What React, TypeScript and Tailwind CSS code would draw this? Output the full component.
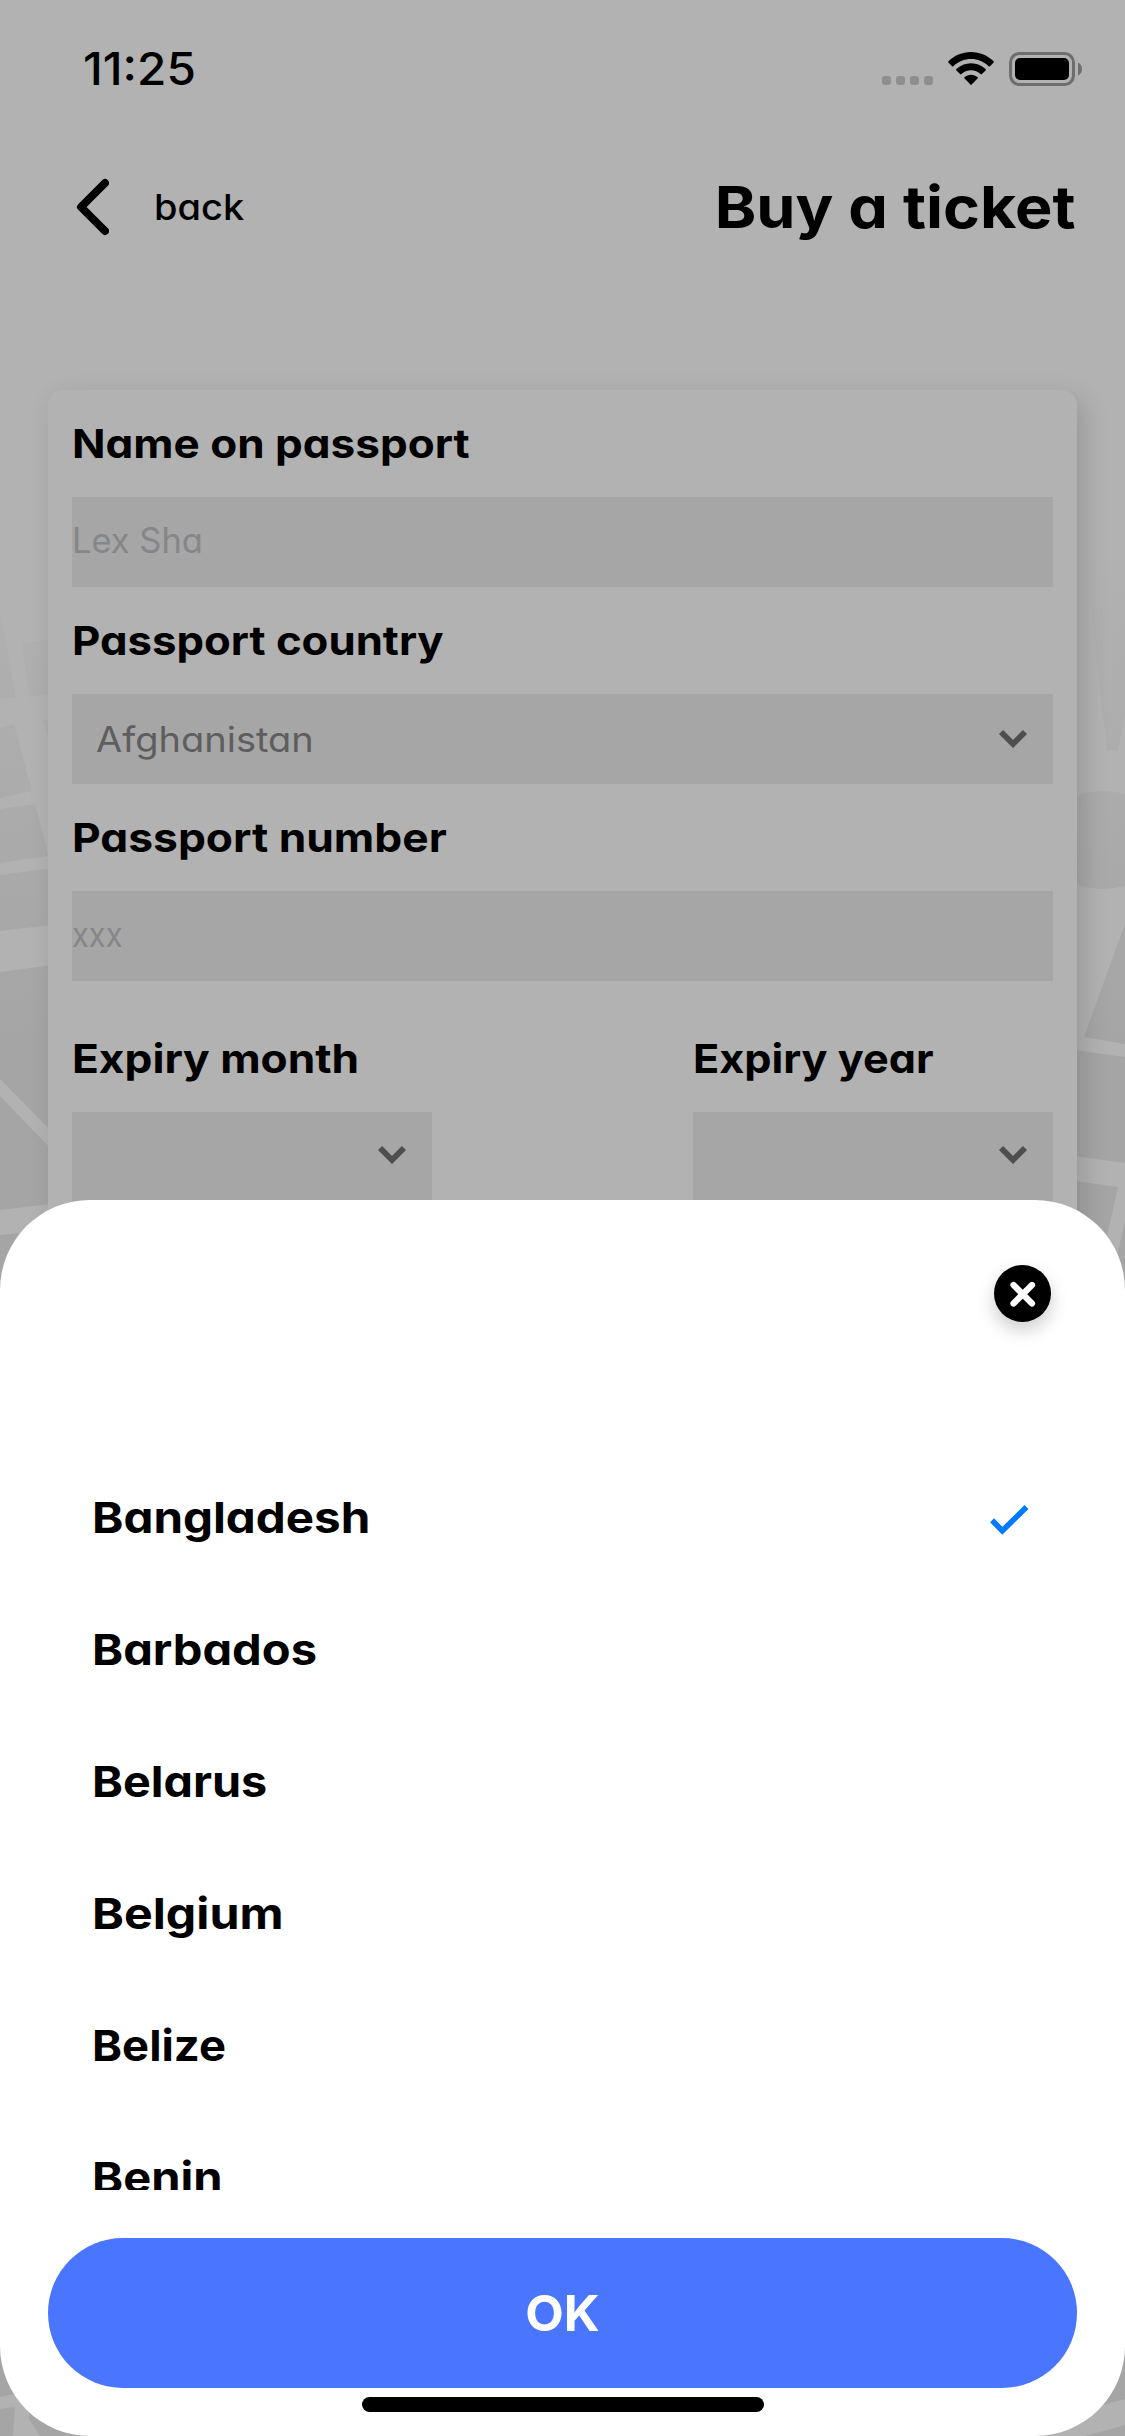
import type { ReactNode } from "react";

const MAP_BLOCKS = [
  "0,610 16,697 0,700",
  "22,643 70,637 70,692 29,697",
  "0,728 14,724 32,791 0,798",
  "0,809 35,804 46,845 48,856 0,863",
  "43,720 60,717 60,780",
  "0,875 60,867 60,924 0,931",
  "0,972 60,964 60,1140 0,1079",
  "0,1096 60,1158 60,1203 0,1210",
  "0,1235 80,1227 80,1340 0,1340",
  "1123,929 1125,924 1125,1044 1084,1037",
  "1060,1048 1125,1057 1125,1163 1060,1154",
  "1060,1179 1118,1187 1104,1250 1060,1250",
  "1125,1222 1116,1260 1125,1290",
  "0,2340 90,2340 15,2394 0,2397",
  "0,2409 15,2407 13,2436 0,2436",
  "29,2412 29,2419 40,2436 100,2436",
  "1060,2340 1125,2340 1125,2399 1060,2417",
  "1085,2436 1125,2425 1125,2436",
];

function MapBackdrop() {
  return (
    <svg className="absolute inset-0" width="1125" height="2436" viewBox="0 0 1125 2436" aria-hidden="true">
      <defs>
        <linearGradient id="fade" gradientUnits="userSpaceOnUse" x1="0" y1="540" x2="0" y2="1040">
          <stop offset="0" stopColor="#a5a5a5" stopOpacity="0" />
          <stop offset="1" stopColor="#a5a5a5" />
        </linearGradient>
      </defs>
      <g fill="url(#fade)">
        {MAP_BLOCKS.map((points) => (
          <polygon key={points} points={points} />
        ))}
        <polygon points="1085,560 1125,560 1125,715 1118,750 1107,750" />
        <ellipse cx="1104" cy="840" rx="62" ry="49" />
      </g>
    </svg>
  );
}

function StatusBar() {
  return (
    <div className="flex h-[138px] items-center justify-between pr-[43px] pl-[83px]">
      <span className="origin-left scale-x-[1.06] text-[45px] font-medium">11:25</span>
      <div className="flex items-center">
        <div className="mt-[23px] mr-[15px] flex gap-[5px]">
          {[0, 1, 2, 3].map((i) => (
            <span key={i} className="size-[9px] rounded-[3px] bg-[#8e8e8e]" />
          ))}
        </div>
        <svg width="46" height="34" viewBox="0 0 46 34" aria-label="Wi-Fi">
          <path d="M23 0C14.300 0 6.200 3.500 0.400 9.300a1 1 0 0 0 0 1.300L4 14.200a1 1 0 0 0 1.300 0C9.900 9.700 16.200 7 23 7s13.100 2.700 17.700 7.200a1 1 0 0 0 1.300 0l3.600-3.600a1 1 0 0 0 0-1.300C39.800 3.500 31.700 0 23 0z" />
          <path d="M23 11.200c-5.700 0-10.800 2.200-14.600 5.900a1 1 0 0 0 0 1.300l3.700 3.700a1 1 0 0 0 1.300 0c2.500-2.400 5.900-3.800 9.600-3.800s7.100 1.400 9.600 3.800a1 1 0 0 0 1.300 0l3.700-3.700a1 1 0 0 0 0-1.300C33.800 13.400 28.700 11.200 23 11.200z" />
          <path d="M23 22.700c-2.500 0-4.700.9-6.400 2.400a1 1 0 0 0 0 1.400l5.800 5.900a1 1 0 0 0 1.300 0l5.800-5.900a1 1 0 0 0 0-1.400C27.700 23.600 25.500 22.700 23 22.700z" />
        </svg>
        <svg className="ml-[15px]" width="73" height="34" viewBox="0 0 73 34" aria-label="Battery">
          <rect x="1.500" y="1.500" width="63" height="31" rx="9" fill="none" stroke="#6e6e6e" strokeWidth="3" />
          <rect x="6" y="6" width="54" height="22" rx="5" />
          <path d="M69 10.500c2.400 1 4 3.500 4 6.500s-1.600 5.500-4 6.500z" fill="#6e6e6e" />
        </svg>
      </div>
    </div>
  );
}

function Header() {
  return (
    <header className="flex h-[138px] items-center justify-between pr-[49px] pl-[75px]">
      <button className="flex items-center">
        <svg width="34" height="58" viewBox="0 0 34 58" fill="none" stroke="black" strokeWidth="8" strokeLinecap="round" strokeLinejoin="round">
          <path d="M30 5 6 29 30 53" />
        </svg>
        <span className="ml-[45px] origin-left scale-x-[1.055] text-[36px] font-medium">back</span>
      </button>
      <h1 className="origin-right scale-x-[1.085] text-[58px] font-bold">Buy a ticket</h1>
    </header>
  );
}

function Label({ stretch, children }: { stretch: string; children: ReactNode }) {
  return (
    <label className="flex h-[107px] items-center text-[40px] font-bold whitespace-nowrap">
      <span className={`origin-left ${stretch}`}>{children}</span>
    </label>
  );
}

function TextBox({ stretch, children }: { stretch: string; children: ReactNode }) {
  return (
    <div className="flex h-[90px] items-center bg-[#a6a6a6] pb-[3px] text-[35px] text-[#868688]">
      <span className={`origin-left ${stretch}`}>{children}</span>
    </div>
  );
}

function SelectBox({ value }: { value?: string }) {
  return (
    <div className="flex h-[90px] items-center justify-between bg-[#a6a6a6] pr-[26px] pl-6 text-[35px] text-[#5e5e5e]">
      <span className="origin-left scale-x-[1.086]">{value}</span>
      <svg className={value ? "" : "mb-[4px]"} width="28" height="19" viewBox="0 0 28 19" fill="none" stroke="#4e4e4e" strokeWidth="5.800">
        <path d="M2.050 2.050 14 14 25.950 2.050" />
      </svg>
    </div>
  );
}

function PassportForm() {
  return (
    <section className="relative mx-12 mt-[114px] h-[1000px] rounded-[15px] bg-[#b2b2b2] px-6 shadow-[7px_8px_26px_rgba(0,0,0,0.15)]">
      <Label stretch="scale-x-[1.101]">Name on passport</Label>
      <TextBox stretch="scale-x-[0.985]">Lex Sha</TextBox>
      <Label stretch="scale-x-[1.093]">Passport country</Label>
      <SelectBox value="Afghanistan" />
      <Label stretch="scale-x-[1.108]">Passport number</Label>
      <TextBox stretch="scale-x-[0.880]">xxx</TextBox>
      <div className="mt-6 flex justify-between">
        <div className="w-[360px]">
          <Label stretch="scale-x-[1.106]">Expiry month</Label>
          <SelectBox />
        </div>
        <div className="w-[360px]">
          <Label stretch="scale-x-[1.080]">Expiry year</Label>
          <SelectBox />
        </div>
      </div>
    </section>
  );
}

const COUNTRIES = [
  { name: "Bangladesh", stretch: "scale-x-[1.105]", selected: true },
  { name: "Barbados", stretch: "scale-x-[1.095]" },
  { name: "Belarus", stretch: "scale-x-[1.087]" },
  { name: "Belgium", stretch: "scale-x-[1.123]" },
  { name: "Belize", stretch: "scale-x-[1.057]" },
  { name: "Benin", stretch: "scale-x-[1.095]" },
];

function CountrySheet() {
  return (
    <div className="absolute inset-x-0 bottom-0 h-[1236px] rounded-[90px] bg-white">
      <div className="flex h-[251px] items-start justify-end pt-[65px] pr-[74px]">
        <button aria-label="Close" className="flex size-[57px] items-center justify-center rounded-full bg-black shadow-[0_8px_18px_rgba(0,0,0,0.2)]">
          <svg width="27" height="27" viewBox="0 0 27 27" stroke="white" strokeWidth="6.200" strokeLinecap="round">
            <path d="M4.500 5 23 23.500M23 5 4.500 23.500" />
          </svg>
        </button>
      </div>
      <ul className="h-[739px] overflow-hidden">
        {COUNTRIES.map(({ name, stretch, selected }) => (
          <li key={name} className="flex h-[132px] items-center justify-between pr-24 pl-[92px]">
            <span className={`origin-left text-[43px] font-bold ${stretch}`}>{name}</span>
            {selected && (
              <svg className="mt-1.5" width="39" height="30" viewBox="0 0 39 30" fill="none" stroke="#007aff" strokeWidth="5.600">
                <path d="M2.100 15.300 12.300 25.800 36.500 2" />
              </svg>
            )}
          </li>
        ))}
      </ul>
      <button className="mx-12 mt-12 flex h-[150px] w-[1029px] items-center justify-center rounded-[75px] bg-[#4975ff] text-[50px] font-bold text-white">
        OK
      </button>
      <div className="mx-auto mt-[9px] h-[15px] w-[402px] rounded-full bg-black" />
    </div>
  );
}

export default function App() {
  return (
    <div className="relative h-[2436px] w-[1125px] overflow-hidden bg-[#b2b2b2] font-['Inter',sans-serif] text-black [font-feature-settings:'cv11']">
      <MapBackdrop />
      <div className="relative">
        <StatusBar />
        <Header />
        <PassportForm />
      </div>
      <CountrySheet />
    </div>
  );
}
